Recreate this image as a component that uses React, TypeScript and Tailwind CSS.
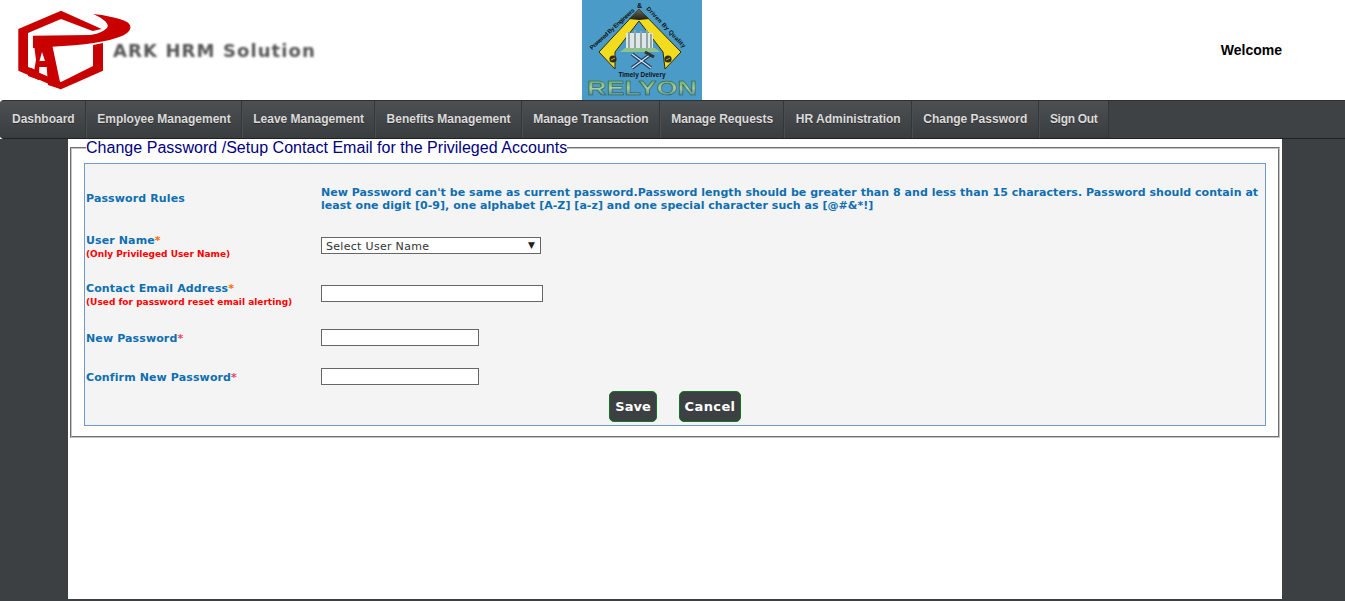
import React from "react";

const navItems = [
  "Dashboard",
  "Employee Management",
  "Leave Management",
  "Benefits Management",
  "Manage Transaction",
  "Manage Requests",
  "HR Administration",
  "Change Password",
  "Sign Out",
];

function ArkLogo() {
  return (
    <div className="relative w-[330px] h-[100px] shrink-0">
      <svg width="135" height="100" viewBox="0 0 135 100" className="absolute left-0 top-0 blur-[0.5px]">
        <path fill="#c80000" d="M61 10.7 L18.3 29 V70.7 L61 89.3 L103 70.7 V43 L93 45 V66 L61 82 L28 68 V33 L61 19 L92.7 31 L101.7 29 Z" />
        <path
          fill="#c80000"
          d="M93 14 C104 15 120 18 127 22 C133 26 131 32 122 36 C108 42 84 45 51.7 46.7 L33 48 L32.7 35.7 L90 35 C98 34 104 31 107 28 C110 24 104 19 93 14 Z"
        />
        <path
          fill="#c80000"
          d="M33 37 L42 37 L52 44 L60 82 L61 89.3 L48 85 L46.7 67 L39.3 67 L39 80 L33 77 L36 60 Z"
        />
        <path fill="#c80000" d="M28 66 L39 72 L39 80 L28 76 Z" />
        <path fill="#ffffff" d="M42 52 L39.5 61 L45 61 Z" />
        <path fill="#ffffff" d="M28 37 L33 36 L31 68 L28 67 Z" />
      </svg>
      <div className="absolute left-[113px] top-[41px] text-[18px] leading-[20px] font-bold tracking-[1.1px] text-[#555] whitespace-nowrap blur-[0.9px] [font-family:'DejaVu_Sans',Verdana,sans-serif]">
        ARK HRM Solution
      </div>
    </div>
  );
}

function RelyonLogo() {
  const sans = "Liberation Sans, Arial, sans-serif";
  return (
    <svg width="120" height="100" viewBox="0 0 120 100" className="block shrink-0">
      <defs>
        <linearGradient id="rel" x1="0" y1="0" x2="0" y2="1">
          <stop offset="0" stopColor="#4d9a4a" />
          <stop offset="0.5" stopColor="#a8d0a0" />
          <stop offset="1" stopColor="#2f6f8f" />
        </linearGradient>
        <linearGradient id="cap" x1="0" y1="0" x2="0" y2="1">
          <stop offset="0" stopColor="#6a6a5a" />
          <stop offset="1" stopColor="#1f1f14" />
        </linearGradient>
        <path id="arcL" d="M10 50 L54 10" />
        <path id="arcR" d="M64 9 L103 50" />
      </defs>
      <rect width="120" height="100" fill="#4b9bc8" />
      <path d="M57 9 L99 52 L83 69 L81 52 L57 21 L33 52 L33 69 L17 52 Z" fill="#f2dc1d" stroke="#2b2b18" strokeWidth="1" />
      <path d="M57 9 L67 19 L57 20 L47 19 Z" fill="url(#cap)" />
      <path d="M43 48 L73 48 L78 52 L38 52 Z" fill="#8fc28a" />
      <rect x="44" y="33" width="27" height="15" fill="#dfe6e6" />
      <path d="M47 32 V48 M53 30 V48 M59 31 V48 M65 30 V48 M69 34 V48" stroke="#93a5a5" strokeWidth="2" />
      <circle cx="31" cy="59" r="3.6" fill="#2d2d18" />
      <circle cx="86" cy="59" r="3.6" fill="#2d2d18" />
      <path d="M29 60 L33 58 M84 60 L88 58" stroke="#e8d83a" strokeWidth="0.8" />
      <path d="M50 54 L69 68" stroke="#1f3f66" strokeWidth="3.5" />
      <path d="M69 54 L50 68" stroke="#1f3f66" strokeWidth="3.5" />
      <path d="M50 54 L69 68 M69 54 L50 68" stroke="#dfe6ea" strokeWidth="1.2" />
      <path d="M63 52 L72 57" stroke="#333" strokeWidth="3" />
      <text fontSize="6" fontWeight="700" fill="#111" fontFamily={sans}>
        <textPath href="#arcL" textLength="58">Powered By Engineers</textPath>
      </text>
      <text x="55" y="8" fontSize="7" fontWeight="700" fill="#111" fontFamily={sans}>&amp;</text>
      <text fontSize="6" fontWeight="700" fill="#111" fontFamily={sans}>
        <textPath href="#arcR" textLength="54">Driven By Quality</textPath>
      </text>
      <text x="60" y="77" textAnchor="middle" fontSize="6.5" fontWeight="700" fill="#111" fontFamily={sans} textLength="47" lengthAdjust="spacingAndGlyphs">
        Timely Delivery
      </text>
      <text x="60" y="95" textAnchor="middle" fontSize="20" fontWeight="700" textLength="110" lengthAdjust="spacingAndGlyphs" fill="url(#rel)" stroke="#2c5a4a" strokeWidth="0.5" fontFamily={sans}>
        RELYON
      </text>
    </svg>
  );
}

function Label({ text, star, note, top }: { text: string; star: string; note?: string; top?: string }) {
  return (
    <div className={`w-[235px] shrink-0 pl-px ${top ?? ""}`}>
      <div className="leading-[14px]">
        <span className="text-[11px] font-bold tracking-[0.12px] text-[#0f6fb0]">{text}</span>
        <span className={`text-[11px] font-bold ${star}`}>*</span>
      </div>
      {note && <div className="text-[9px] font-bold leading-[13px] text-[#ff0000]">{note}</div>}
    </div>
  );
}

export default function App() {
  return (
    <div className="h-[601px] overflow-hidden bg-white flex flex-col [font-family:'DejaVu_Sans',Verdana,sans-serif]">
      <header className="h-[100px] shrink-0 bg-white flex">
        <ArkLogo />
        <div className="w-[252px] shrink-0" />
        <RelyonLogo />
        <div className="flex-1 flex items-center justify-end pr-[63px]">
          <span className="text-[14px] font-bold text-black [font-family:'Liberation_Sans',Arial,sans-serif]">Welcome</span>
        </div>
      </header>

      <nav className="h-[39px] shrink-0 flex bg-[#3e4245] border-t border-b border-t-[#2f3234] border-b-[#1f2123] rounded-l-[4px] overflow-hidden [font-family:'Liberation_Sans',Arial,sans-serif]">
        {navItems.map((item) => (
          <div
            key={item}
            className="h-full flex items-center px-[10.3px] first:pl-[12px] last:tracking-[-0.3px] pb-px border-r border-r-[#33373a] border-l border-l-[#4a4e51] first:border-l-0 bg-gradient-to-b from-[#4d5052] to-[#3a3d3f] text-[12px] font-bold text-[#dadada] whitespace-nowrap [text-shadow:0_1px_0_#2a2a2a]"
          >
            {item}
          </div>
        ))}
      </nav>

      <main className="flex-1 bg-[#3c4043] flex min-h-0">
        <div className="w-[1214px] h-[460px] ml-[68px] bg-white px-[2px]">
          <fieldset className="border-2 border-[#c4c4c4] h-[299px] pl-[12px] pr-[12px] pt-0 [border-style:groove]">
            <legend className="ml-[2px] text-[16px] leading-[18px] tracking-[0.03px] text-[#000080] px-0 [font-family:'Liberation_Sans',Arial,sans-serif]">
              Change Password /Setup Contact Email for the Privileged Accounts
            </legend>
            <div className="mt-[6px] h-[263px] bg-[#f4f4f4] border border-[#6d9bd0] flex flex-col">
              <div className="h-[67px] flex items-center pt-[2px] shrink-0">
                <div className="w-[236px] shrink-0 pl-px pt-[2px] text-[11px] font-bold tracking-[0.12px] text-[#0f6fb0]">Password Rules</div>
                <div className="flex-1 pr-[3px] text-[11px] leading-[13px] font-bold tracking-[0.04px] text-[#0f6fb0]">
                  New Password can't be same as current password.Password length should be greater than 8 and less than 15 characters. Password should contain at least one digit [0-9], one alphabet [A-Z] [a-z] and one special character such as [@#&amp;*!]
                </div>
              </div>

              <div className="h-[46px] flex items-start shrink-0 pt-[1px]">
                <Label text="User Name" star="text-[#ff6a00]" note="(Only Privileged User Name)" />
                <div className="ml-px mt-[5px] w-[220px] h-[17px] bg-white border border-[#666] flex items-center justify-between pl-[4px] pr-[5px]">
                  <span className="pt-[3px] text-[11px] tracking-[0.3px] text-[#333]">Select User Name</span>
                  <span className="text-[9px] leading-none text-[#222]">▼</span>
                </div>
              </div>

              <div className="h-[46px] flex items-start shrink-0 pt-[3px]">
                <Label text="Contact Email Address" star="text-[#ff6a00]" note="(Used for password reset email alerting)" />
                <div className="ml-px mt-[5px] w-[222px] h-[17px] bg-white border border-[#666]" />
              </div>

              <div className="h-[40px] flex items-start shrink-0 pt-[6px]">
                <Label text="New Password" star="text-[#e8486a]" top="mt-px" />
                <div className="ml-px w-[158px] h-[17px] bg-white border border-[#666]" />
              </div>

              <div className="h-[39px] flex items-start shrink-0 pt-[5px]">
                <Label text="Confirm New Password" star="text-[#e8486a]" top="mt-px" />
                <div className="ml-px w-[158px] h-[17px] bg-white border border-[#666]" />
              </div>

              <div className="flex justify-center gap-[22px] -mt-[11px]">
                <div className="w-[48px] h-[31px] rounded-[5px] bg-[#3c4043] border border-[#0f7a1a] flex items-center justify-center text-[13px] font-bold text-white">Save</div>
                <div className="w-[62px] h-[31px] rounded-[5px] bg-[#3c4043] border border-[#0f7a1a] flex items-center justify-center text-[13px] font-bold tracking-[0.4px] text-white">Cancel</div>
              </div>
            </div>
          </fieldset>
        </div>
      </main>
    </div>
  );
}
